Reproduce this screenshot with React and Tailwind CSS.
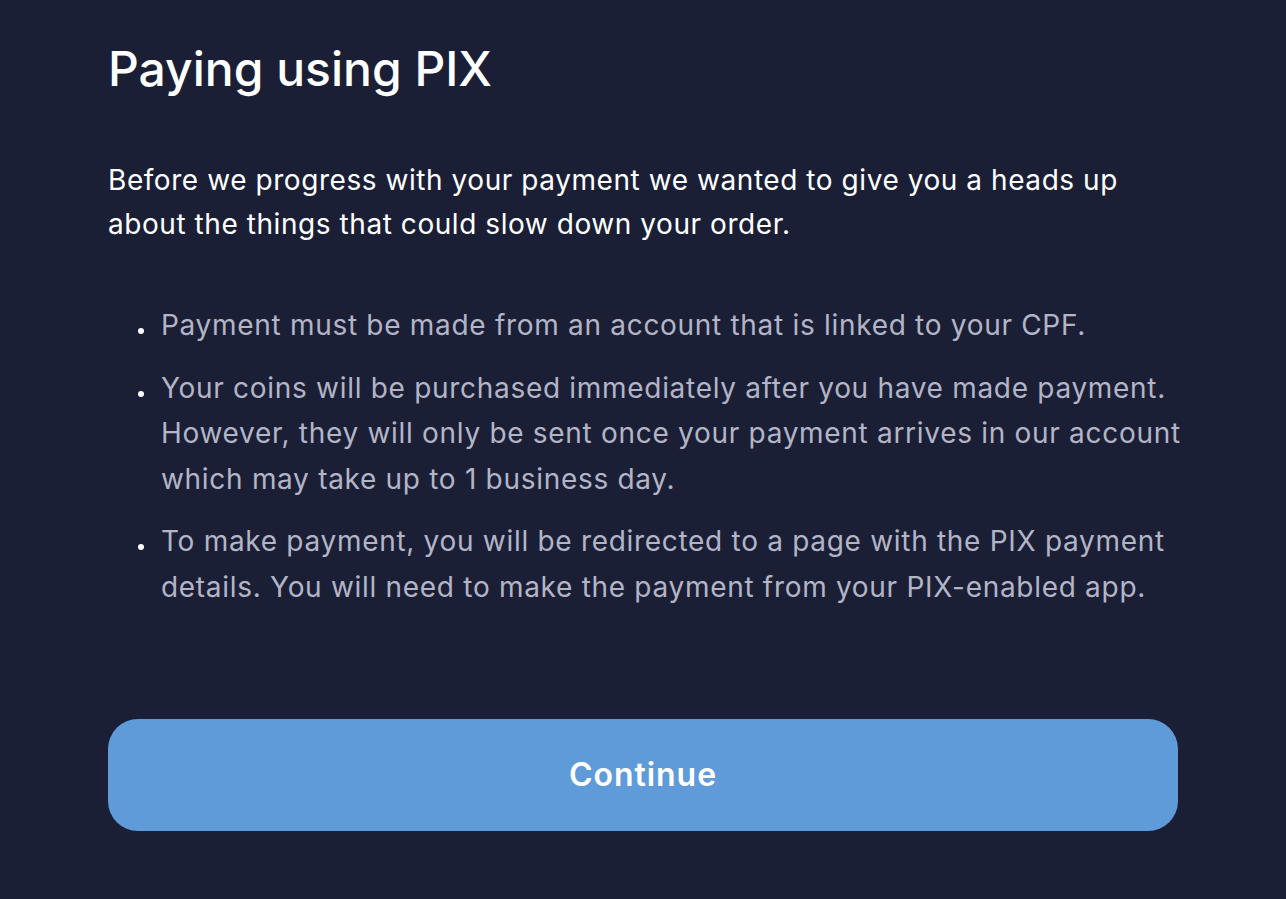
import React from "react";

const items = [
  "Payment must be made from an account that is linked to your CPF.",
  "Your coins will be purchased immediately after you have made payment. However, they will only be sent once your payment arrives in our account which may take up to 1 business day.",
  "To make payment, you will be redirected to a page with the PIX payment details. You will need to make the payment from your PIX-enabled app.",
];

export default function App() {
  return (
    <div className="min-h-screen w-full bg-[#1b1f36] font-['Inter',sans-serif]">
      <div className="w-[1070px] ml-[108px] pt-[38px]">
        <h1 className="text-[48px] leading-[62px] font-medium text-white">Paying using PIX</h1>

        <p className="mt-[58px] text-[28px] leading-[44px] tracking-[0.02em] text-white">
          Before we progress with your payment we wanted to give you a heads up about the things that could slow down your order.
        </p>

        <ul className="mt-[57px] w-[1082px] pl-[30px] flex flex-col gap-[17px] text-[28px] leading-[45.5px] tracking-[0.025em] text-[#b3b5c6]">
          {items.map((t) => (
            <li key={t} className="flex items-start">
              <span className="mt-[25px] mr-[17px] w-[6px] h-[6px] rounded-full bg-white shrink-0" />
              <span>{t}</span>
            </li>
          ))}
        </ul>

        <button className="mt-[109px] w-full h-[112px] rounded-[30px] bg-[#5f9bd9] text-white text-[32px] font-semibold tracking-[0.03em]">
          Continue
        </button>
      </div>
    </div>
  );
}
